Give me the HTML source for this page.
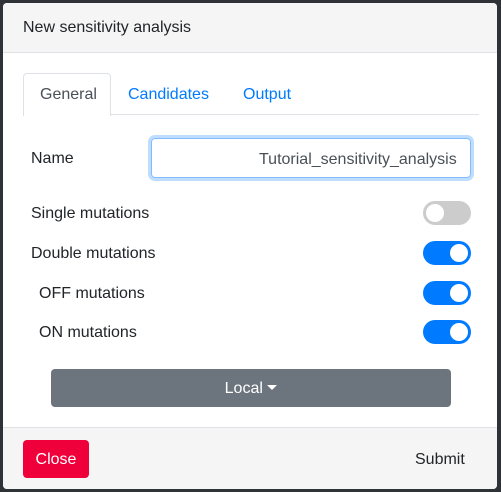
<!DOCTYPE html>
<html><head><style>
body{margin:0;width:501px;height:492px;background:#2f3236;font-family:"Liberation Sans",sans-serif;position:relative;overflow:hidden;color:#212529}
.m{position:absolute;left:3px;top:3px;width:494px;height:486px;background:#fff;border-radius:4px;overflow:hidden}
.hd{position:absolute;left:0;top:0;right:0;height:49px;background:#f5f5f5;border-bottom:1px solid #dee2e6}
.hd span{position:absolute;left:20px;top:16px;font-size:16px}
.ft{position:absolute;left:0;top:424px;right:0;bottom:0;background:#f5f5f5;border-top:1px solid #dee2e6}
.t{position:absolute;font-size:16px}
.tabline{position:absolute;left:20px;top:111px;width:456px;height:1px;background:#dee2e6}
.tab{position:absolute;left:20px;top:70px;width:86px;height:42px;border:1px solid #dee2e6;border-bottom:none;border-radius:4px 4px 0 0;background:#fff}
.in{position:absolute;left:148px;top:135px;width:318px;height:38px;border:1px solid #80bdff;border-radius:4px;box-shadow:0 0 0 3px rgba(0,123,255,.25)}
.tg{position:absolute;left:420px;width:48px;height:24px;border-radius:12px;background:#007bff}
.tg::after{content:"";position:absolute;top:3px;left:27px;width:18px;height:18px;border-radius:50%;background:#fff}
.tg.off{background:#ccc}.tg.off::after{left:3px}
.btn{position:absolute;border-radius:4px;color:#fff;font-size:16px;text-align:center}
</style></head><body>
<div class="m">
<div class="hd"><span>New sensitivity analysis</span></div>
<div class="tabline"></div><div class="tab"></div>
<div class="t" style="left:37px;top:83px;color:#495057">General</div>
<div class="t" style="left:125px;top:83px;color:#007bff">Candidates</div>
<div class="t" style="left:240px;top:83px;color:#007bff">Output</div>
<div class="t" style="left:28px;top:147px">Name</div>
<div class="in"></div>
<div class="t" style="left:256px;top:148px;color:#495057">Tutorial_sensitivity_analysis</div>
<div class="t" style="left:28px;top:202px">Single mutations</div><div class="tg off" style="top:198px"></div>
<div class="t" style="left:28px;top:242px">Double mutations</div><div class="tg" style="top:238px"></div>
<div class="t" style="left:36px;top:282px">OFF mutations</div><div class="tg" style="top:278px"></div>
<div class="t" style="left:36px;top:321px">ON mutations</div><div class="tg" style="top:317px"></div>
<div class="btn" style="left:48px;top:366px;width:400px;height:38px;background:#6c757d;line-height:40px">Local <span style="display:inline-block;border:5px solid transparent;border-top-color:#fff;border-bottom:0;vertical-align:3px"></span></div>
<div class="ft"></div>
<div class="btn" style="left:20px;top:437px;width:66px;height:38px;background:#f0003a;line-height:40px">Close</div>
<div class="t" style="left:412px;top:448px">Submit</div>
</div>
</body></html>
